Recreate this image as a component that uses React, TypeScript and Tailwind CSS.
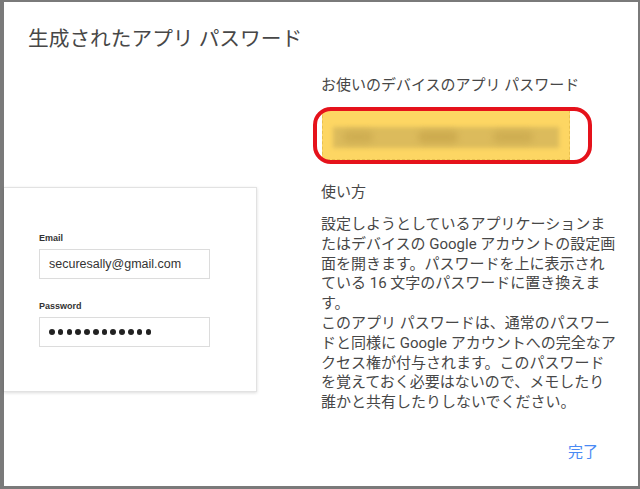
const LINES = [
  '設定しようとしているアプリケーションま',
  'たはデバイスの Google アカウントの設定画',
  '面を開きます。パスワードを上に表示され',
  'ている 16 文字のパスワードに置き換えま',
  'す。',
  'このアプリ パスワードは、通常のパスワー',
  'ドと同様に Google アカウントへの完全なア',
  'クセス権が付与されます。このパスワード',
  'を覚えておく必要はないので、メモしたり',
  '誰かと共有したりしないでください。',
];

function LoginCard() {
  return (
    <div className="w-[253px] border-y border-r border-[#e2e2e2] bg-white pl-[35px] pt-[44px] pb-[44px] shadow-[0_1px_3px_rgba(0,0,0,0.14)] font-['Liberation_Sans',Arial,sans-serif] text-[#333]">
      <p className="text-[9px] leading-[12px] font-bold">Email</p>
      <div className="mt-[5px] flex h-[30px] w-[171px] items-center border border-[#dcdcdc] px-[9px] text-[12.5px]">
        securesally@gmail.com
      </div>
      <p className="mt-[21px] text-[9px] leading-[12px] font-bold">Password</p>
      <div className="mt-[5px] flex h-[30px] w-[171px] items-center gap-[3.2px] border border-[#dcdcdc] px-[9px]">
        {Array.from({ length: 12 }).map((_, i) => (
          <span key={i} className="h-[5.6px] w-[5.6px] rounded-full bg-[#222]" />
        ))}
      </div>
    </div>
  );
}

export default function App() {
  return (
    <div className="h-[489px] w-[640px] overflow-hidden bg-[#7a7a7a] pl-[4px] pt-[2px] pr-[2px] pb-[3px] font-[Roboto,'Noto_Sans_CJK_JP',sans-serif]">
      <div className="flex h-full w-full flex-col bg-white text-[#474747]">
        <h1 className="pl-[24px] pt-[23px] text-[20.7px] leading-[28px] font-normal">
          生成されたアプリ パスワード
        </h1>

        <div className="flex items-start">
          <div className="mt-[134px] w-[317px] shrink-0">
            <LoginCard />
          </div>

          <div className="mt-[22px] text-[15px] leading-[20px]">
            <p>お使いのデバイスのアプリ パスワード</p>

            <div className="relative mt-[15px] ml-[1px] h-[50px] w-[248px] border border-dashed border-[#e9c04f] bg-[#fdd663]">
              <div className="absolute left-[10px] top-[16px] h-[21px] w-[226px] bg-[#dcbb5c] blur-[2px]" />
              <div className="absolute left-[20px] top-[20px] h-[12px] w-[30px] rounded-full bg-[#cfae52] blur-[3px]" />
              <div className="absolute left-[95px] top-[20px] h-[12px] w-[40px] rounded-full bg-[#cdab4f] blur-[3px]" />
              <div className="absolute left-[170px] top-[20px] h-[12px] w-[40px] rounded-full bg-[#cfae52] blur-[3px]" />
              <div className="absolute -left-[10px] -top-[4px] h-[57px] w-[279px] rounded-[18px] border-[4px] border-[#e5121b]" />
            </div>

            <p className="mt-[22px]">使い方</p>

            <div className="mt-[13px] leading-[19.8px]">
              {LINES.map((line) => (
                <p key={line} className="whitespace-nowrap">
                  {line}
                </p>
              ))}
            </div>
          </div>
        </div>

        <div className="mt-auto flex justify-end pr-[40px] pb-[24px]">
          <button
            type="button"
            className="text-[15px] leading-[20px] text-[#4a8af4]"
          >
            完了
          </button>
        </div>
      </div>
    </div>
  );
}
